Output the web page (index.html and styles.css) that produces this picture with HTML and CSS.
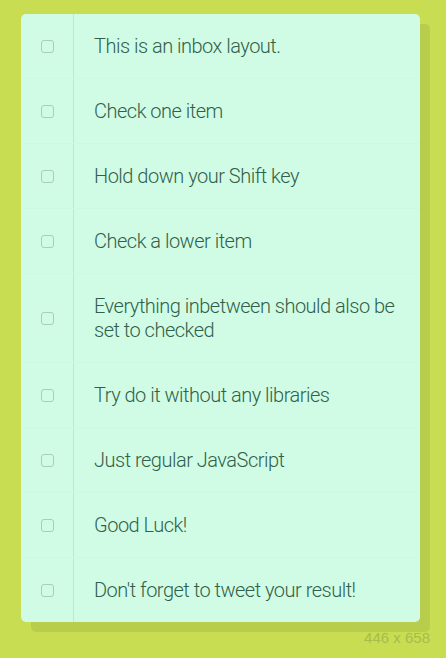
FILE: index.html
```html
<!DOCTYPE html>
<html>
<head>
<meta charset="utf-8">
<link rel="stylesheet" href="styles.css">
</head>
<body>
<div class="inbox">
  <div class="item"><input type="checkbox"><p>This is an inbox layout.</p></div>
  <div class="item"><input type="checkbox"><p>Check one item</p></div>
  <div class="item"><input type="checkbox"><p>Hold down your Shift key</p></div>
  <div class="item"><input type="checkbox"><p>Check a lower item</p></div>
  <div class="item"><input type="checkbox"><p>Everything inbetween should also be set to checked</p></div>
  <div class="item"><input type="checkbox"><p>Try do it without any libraries</p></div>
  <div class="item"><input type="checkbox"><p>Just regular JavaScript</p></div>
  <div class="item"><input type="checkbox"><p>Good Luck!</p></div>
  <div class="item"><input type="checkbox"><p>Don't forget to tweet your result!</p></div>
</div>
<div class="size">446 x 658</div>
</body>
</html>
```

FILE: styles.css
```css
html {
  background: #c8dd52;
}
body {
  margin: 0;
  padding: 14px 0 0 21px;
  font-family: Roboto, "Liberation Sans", sans-serif;
  position: relative;
  min-height: 644px;
}
.inbox {
  width: 399px;
  background: #d0fce5;
  border-radius: 5px;
  box-shadow: 10px 10px 0 rgba(0, 0, 0, 0.07);
}
.item {
  display: flex;
  align-items: center;
  border-bottom: 1px solid #cdf9e2;
}
.item:last-child {
  border-bottom: 0;
}
.item input {
  appearance: none;
  -webkit-appearance: none;
  box-sizing: border-box;
  width: 13px;
  height: 13px;
  margin: 20px 19px 20px 20px;
  border: 1px solid #a9cdb9;
  border-radius: 3px;
  background: transparent;
  flex: none;
}
.item p {
  margin: 0;
  padding: 20px;
  flex: 1;
  font-size: 20px;
  line-height: 24px;
  font-weight: 300;
  letter-spacing: -0.5px;
  color: #325f4a;
  border-left: 1px solid #bde9d3;
}
.size {
  position: absolute;
  right: 16px;
  bottom: 13px;
  font-family: "Liberation Sans", sans-serif;
  font-size: 15px;
  line-height: 15px;
  color: #a6bc4c;
}
```
